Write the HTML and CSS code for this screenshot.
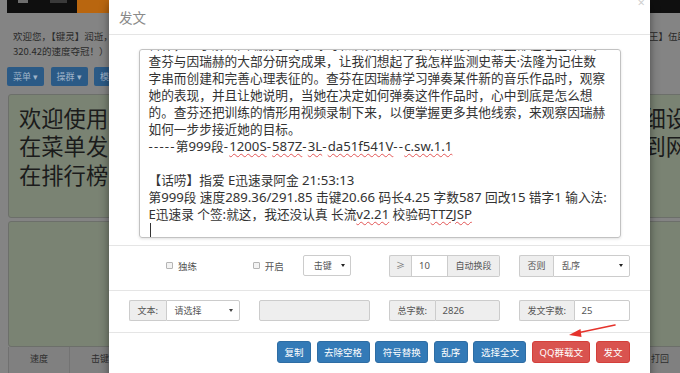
FILE: index.html
```html
<!DOCTYPE html>
<html lang="zh-CN">
<head>
<meta charset="utf-8">
<title>发文</title>
<link rel="stylesheet" href="styles.css">
</head>
<body>
<div class="page">
  <div class="navbar">
    <div class="nav-left">
      <span class="nav-ico"></span>
      <span class="nav-ico nav-ico-wide"></span>
    </div>
    <div class="nav-orange"></div>
  </div>
  <div class="welcome">
    <div class="bl-line"><span class="wl-left">欢迎您，【键灵】润逝，</span><span>王】伍助</span></div>
    <div>320.42的速度夺冠！）</div>
  </div>
  <div class="toolbar">
    <span class="tb-btn">菜单 ▾</span>
    <span class="tb-btn">操群 ▾</span>
    <span class="tb-btn">模式 ▾</span>
  </div>
  <div class="panel panel-big">
    <div class="bl-line"><span class="big-left">欢迎使用本</span><span>细设</span></div>
    <div class="bl-line"><span class="big-left">在菜单发文</span><span>到网</span></div>
    <div class="bl-line"><span class="big-left">在排行榜中</span></div>
  </div>
  <div class="panel panel-low"></div>
  <div class="stats">
    <span class="cell">速度</span><span class="cell">击键</span><span class="cell"></span><span class="cell"></span><span class="cell"></span><span class="cell"></span><span class="cell"></span><span class="cell"></span><span class="cell"></span><span class="cell"></span><span class="cell cell-last">打回</span>
  </div>
</div>

<div class="modal">
  <div class="modal-header">
    <span class="modal-title">发文</span>
    <span class="modal-close">×</span>
  </div>
  <div class="modal-body">
    <div class="textarea">
      <div class="ta-text"><div>合作，以了解当因瑞赫学习、练习和演奏某件音乐作品时，头脑里都在想些什么。</div><div>查芬与因瑞赫的大部分研究成果，让我们想起了我怎样监测史蒂夫·法隆为记住数</div><div>字串而创建和完善心理表征的。查芬在因瑞赫学习弹奏某件新的音乐作品时，观察</div><div>她的表现，并且让她说明，当她在决定如何弹奏这件作品时，心中到底是怎么想</div><div>的。查芬还把训练的情形用视频录制下来，以便掌握更多其他线索，来观察因瑞赫</div><div>如何一步步接近她的目标。</div><div><span class="en"><span class="hy">-----</span></span>第<span class="en">999</span>段<span class="en"><span class="hy">-</span><span class="sp">1200S</span><span class="hy">-</span><span class="sp">587Z</span><span class="hy">-</span><span class="sp">3L</span><span class="hy">-</span><span class="sp">da51f541V</span><span class="hy">--</span><span class="sp">c.sw.1.1</span></span></div><div class="blank"></div><div>【话唠】指爱 <span class="en">E</span>迅速录阿金 <span class="en">21:53:13</span></div><div>第<span class="en">999</span>段 速度<span class="en">289.36/291.85 </span>击键<span class="en">20.66 </span>码长<span class="en">4.25 </span>字数<span class="en">587 </span>回改<span class="en">15 </span>错字<span class="en">1 </span>输入法<span class="en">:</span></div><div><span class="en">E</span>迅速录 个签<span class="en">:</span>就这，我还没认真 长流<span class="en sp">v2.21</span> 校验码<span class="en sp">TTZJSP</span></div><div><span class="caret-line"></span></div></div>
    </div>
  </div>

  <div class="opt-row row-a">
    <div class="cell-a1">
      <label class="check"><span class="box"></span>独练</label>
    </div>
    <div class="cell-a2">
      <label class="check"><span class="box"></span>开启</label>
      <span class="select select-sm">击键<span class="sel-arrow"></span></span>
    </div>
    <div class="group">
      <span class="addon addon-ge">≥</span>
      <span class="ctrl ctrl-10">10</span>
      <span class="addon">自动换段</span>
    </div>
    <div class="group">
      <span class="addon">否则</span>
      <span class="ctrl ctrl-select">乱序<span class="sel-arrow"></span></span>
    </div>
  </div>

  <div class="opt-row row-b">
    <div class="group">
      <span class="addon">文本:</span>
      <span class="ctrl ctrl-select">请选择<span class="caret"></span></span>
    </div>
    <div class="group">
      <span class="ctrl ctrl-disabled ctrl-full"></span>
    </div>
    <div class="group">
      <span class="addon">总字数:</span>
      <span class="ctrl ctrl-disabled">2826</span>
    </div>
    <div class="group">
      <span class="addon">发文字数:</span>
      <span class="ctrl">25</span>
    </div>
  </div>

  <div class="btn-row">
    <button class="btn btn-blue">复制</button>
    <button class="btn btn-blue">去除空格</button>
    <button class="btn btn-blue">符号替换</button>
    <button class="btn btn-blue">乱序</button>
    <button class="btn btn-blue">选择全文</button>
    <button class="btn btn-red">QQ群载文</button>
    <button class="btn btn-red">发文</button>
  </div>
</div>

<svg class="annot-arrow" width="62" height="24" viewBox="0 0 62 24">
  <line x1="54" y1="7" x2="16" y2="15" stroke="#e5332c" stroke-width="1.6" stroke-linecap="round"/>
  <polygon points="8,17 19.5,11 20.5,19" fill="#e5332c"/>
</svg>
</body>
</html>
```

FILE: styles.css
```css
html, body {
  margin: 0;
  padding: 0;
  height: 100%;
  overflow: hidden;
}

body {
  background: #848484;
  font-family: "Noto Sans", "Noto Sans CJK SC", sans-serif;
  color: #222;
}

/* ---------- dimmed background page ---------- */
.page {
  width: 760px;
  padding-left: 7px;
}

.navbar {
  height: 13px;
  background: #0f0f0f;
  display: flex;
}

.nav-left {
  width: 70px;
  display: flex;
  gap: 22px;
  padding-left: 11px;
  box-sizing: border-box;
}

.nav-ico {
  width: 10px;
  height: 3px;
  background: #6e6e6e;
}

.nav-ico-wide {
  width: 17px;
  background: #3a3a3a;
}

.nav-orange {
  width: 240px;
  background: #b9660f;
}

.bl-line {
  display: flex;
  white-space: nowrap;
}

.welcome {
  padding: 16px 0 0 6px;
  font-family: "Noto Sans CJK SC", sans-serif;
  font-size: 9.5px;
  line-height: 15px;
  color: #2a2a2a;
  white-space: nowrap;
}

.wl-left {
  flex: none;
  width: 636px;
}

.toolbar {
  display: flex;
  gap: 6.5px;
  margin-top: 8px;
}

.tb-btn {
  height: 19px;
  line-height: 19px;
  padding: 0 6px;
  background: #2b5a86;
  border-radius: 2px;
  color: #9fb3c8;
  font-family: "Noto Sans CJK SC", sans-serif;
  font-size: 9px;
}

.panel {
  margin-left: 1px;
  background: #7a8373;
  border: 1px solid #6c6f6a;
  border-radius: 3px;
  box-sizing: border-box;
}

.panel-big {
  margin-top: 7.5px;
  height: 124px;
  padding: 8px 0 0 10px;
  font-family: "Noto Sans CJK SC", sans-serif;
  font-size: 22.3px;
  line-height: 28.5px;
  color: #1b1b1b;
}

.big-left {
  flex: none;
  width: 624.4px;
}

.panel-low {
  margin-top: 3px;
  height: 126px;
}

.stats {
  margin-left: 1px;
  height: 30px;
  display: flex;
  background: #808080;
  border-left: 1px solid #707070;
  font-family: "Noto Sans CJK SC", sans-serif;
  font-size: 9px;
  color: #2e2e2e;
}

.cell {
  width: 61px;
  text-align: center;
  line-height: 24px;
  border-right: 1px solid #737373;
  box-sizing: border-box;
}

.cell-last {
  width: 80px;
  text-align: left;
  padding-left: 32px;
}

/* ---------- modal ---------- */
.modal {
  position: absolute;
  top: 0;
  left: 109px;
  width: 541px;
  height: 400px;
  background: #fff;
  box-shadow: 0 3px 9px rgba(0, 0, 0, 0.45);
  font-family: "Noto Sans", "Noto Sans CJK SC", sans-serif;
}

.modal-header {
  height: 34px;
  border-bottom: 1px solid #e5e5e5;
  display: flex;
  align-items: center;
  justify-content: space-between;
  padding: 0 5px 0 10px;
}

.modal-title {
  font-family: "Noto Sans CJK SC", sans-serif;
  font-size: 13.5px;
  color: #8a8a8a;
  margin-top: -1px;
}

.modal-close {
  align-self: flex-start;
  margin-top: -7px;
  font-size: 13px;
  color: #cfcfcf;
}

.modal-body {
  padding: 14.3px 0 6.5px;
  border-bottom: 1px solid #e5e5e5;
}

.textarea {
  width: 482px;
  height: 189px;
  margin: 0 auto 0 29.5px;
  box-sizing: border-box;
  border: 1px solid #c2c2c2;
  border-radius: 3px;
  box-shadow: 0 1px 3px rgba(0, 0, 0, 0.12);
  overflow: hidden;
  padding: 0 9px;
}

.ta-text {
  margin-top: -14.5px;
  font-family: "Noto Sans", "Noto Sans CJK SC", sans-serif;
  font-size: 12.7px;
  line-height: 17px;
  color: #333;
  white-space: pre;
}

.en {
  font-size: 13.2px;
  line-height: 1;
}

.hy {
  letter-spacing: 1.2px;
}

.blank {
  height: 17px;
}

.sp {
  text-decoration: underline wavy #e25555;
  text-decoration-thickness: 1px;
  text-underline-offset: 2px;
}

.caret-line {
  display: inline-block;
  width: 1px;
  height: 15px;
  background: #333;
  vertical-align: top;
  margin-left: 1px;
}

/* option rows */
.opt-row {
  display: grid;
  grid-template-columns: repeat(4, 111px);
  column-gap: 19px;
  align-items: center;
  padding: 0 20px;
  border-bottom: 1px solid #e5e5e5;
  font-size: 9px;
  color: #555;
}

.row-a {
  padding-top: 9px;
  padding-bottom: 13px;
}

.row-b {
  padding-top: 9.7px;
  padding-bottom: 10.3px;
}

.cell-a1 {
  display: flex;
  padding-left: 37px;
}

.cell-a2 {
  display: flex;
  align-items: center;
  margin-left: -6.3px;
}

.check {
  display: flex;
  align-items: center;
  gap: 5px;
  font-family: "Noto Sans CJK SC", sans-serif;
  font-size: 9.5px;
  color: #555;
}

.box {
  width: 7px;
  height: 7px;
  box-sizing: border-box;
  border: 1px solid #b5b5b5;
  border-radius: 1px;
  background: #f3f3f3;
}

.select {
  display: flex;
  align-items: center;
  box-sizing: border-box;
  height: 21px;
  border: 1px solid #ccc;
  border-radius: 2px;
  background: #fff;
  font-family: "Noto Sans CJK SC", sans-serif;
  color: #555;
}

.select-sm {
  width: 48px;
  margin-left: 19px;
  padding: 0 5px 0 10px;
  justify-content: space-between;
}

.sel-arrow {
  width: 0;
  height: 0;
  border-left: 2px solid transparent;
  border-right: 2px solid transparent;
  border-top: 3.5px solid #222;
}

.caret {
  width: 0;
  height: 0;
  border-left: 2.5px solid transparent;
  border-right: 2.5px solid transparent;
  border-top: 3px solid #444;
}

.group {
  display: flex;
  height: 21px;
}

.row-a .group {
  height: 22px;
}

.addon {
  display: flex;
  align-items: center;
  padding: 0 7.5px;
  background: #eee;
  border: 1px solid #ccc;
  font-family: "Noto Sans CJK SC", sans-serif;
  color: #555;
  white-space: nowrap;
}

.addon:first-child {
  border-radius: 2px 0 0 2px;
  border-right: 0;
}

.addon:last-child {
  border-radius: 0 2px 2px 0;
  border-left: 0;
}

.addon-ge {
  width: 24px;
  box-sizing: border-box;
  justify-content: center;
  padding: 0;
  color: #777;
}

.ctrl {
  flex: 1;
  display: flex;
  align-items: center;
  padding: 0 7px;
  border: 1px solid #ccc;
  border-radius: 0 2px 2px 0;
  background: #fff;
  font-size: 9.5px;
  color: #555;
}

.ctrl-10 {
  flex: 0 0 37px;
  box-sizing: border-box;
  border-radius: 0;
}

.ctrl-select {
  justify-content: space-between;
  padding: 0 6px 0 8px;
  font-family: "Noto Sans CJK SC", sans-serif;
  font-size: 9px;
}

.ctrl-disabled {
  background: #eee;
}

.ctrl-full {
  border-radius: 2px;
}

/* buttons */
.btn-row {
  display: flex;
  justify-content: flex-end;
  gap: 5.6px;
  padding: 8.7px 20px 0;
}

.btn {
  height: 21.6px;
  padding: 0 6.5px;
  border-radius: 3px;
  font-family: "Noto Sans", "Noto Sans CJK SC", sans-serif;
  font-size: 9.5px;
  color: #fff;
  line-height: 1;
  border: 1px solid transparent;
}

.btn-blue {
  background: #337ab7;
  border-color: #2e6da4;
}

.btn-red {
  background: #d9534f;
  border-color: #d43f3a;
}

/* annotation arrow laid over the modal */
.annot-arrow {
  position: absolute;
  left: 561px;
  top: 318px;
}
```
